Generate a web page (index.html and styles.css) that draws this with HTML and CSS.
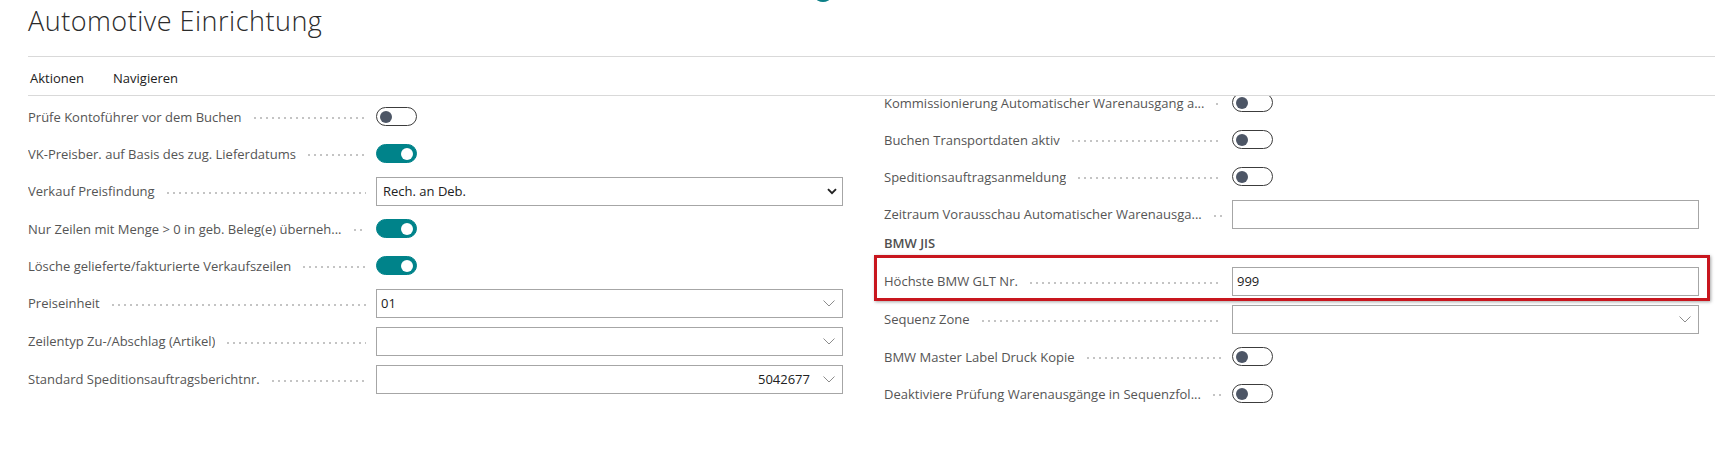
FILE: index.html
```html
<!DOCTYPE html>
<html lang="de">
<head>
<meta charset="utf-8">
<title>Automotive Einrichtung</title>
<link rel="stylesheet" href="styles.css">
</head>
<body>
<div class="spinner"></div>
<header class="title-bar"><h1 class="title">Automotive Einrichtung</h1></header>
<nav class="actions"><span>Aktionen</span><span>Navigieren</span></nav>
<main class="form">
  <section class="col col-left">
    <div class="row"><div class="label"><span class="text">Prüfe Kontoführer vor dem Buchen</span><span class="leader"></span></div><span class="toggle"></span></div>
    <div class="row"><div class="label"><span class="text">VK-Preisber. auf Basis des zug. Lieferdatums</span><span class="leader"></span></div><span class="toggle on"></span></div>
    <div class="row row-i"><div class="label"><span class="text">Verkauf Preisfindung</span><span class="leader"></span></div><div class="field select"><span class="value">Rech. an Deb.</span><svg class="chev-bold" width="10" height="7" viewBox="0 0 10 7"><path d="M1 1.2 L5 5.2 L9 1.2" fill="none" stroke="#222" stroke-width="1.9"/></svg></div></div>
    <div class="row"><div class="label"><span class="text">Nur Zeilen mit Menge &gt; 0 in geb. Beleg(e) überneh...</span><span class="leader"></span></div><span class="toggle on"></span></div>
    <div class="row"><div class="label"><span class="text">Lösche gelieferte/fakturierte Verkaufszeilen</span><span class="leader"></span></div><span class="toggle on"></span></div>
    <div class="row row-i"><div class="label"><span class="text">Preiseinheit</span><span class="leader"></span></div><div class="field"><span class="value">01</span><svg class="chev" width="12" height="7" viewBox="0 0 12 7"><path d="M0.5 0.5 L6 6 L11.5 0.5" fill="none" stroke="#8c8c8c" stroke-width="1"/></svg></div></div>
    <div class="row row-i"><div class="label"><span class="text">Zeilentyp Zu-/Abschlag (Artikel)</span><span class="leader"></span></div><div class="field"><span class="value"></span><svg class="chev" width="12" height="7" viewBox="0 0 12 7"><path d="M0.5 0.5 L6 6 L11.5 0.5" fill="none" stroke="#8c8c8c" stroke-width="1"/></svg></div></div>
    <div class="row row-i"><div class="label"><span class="text">Standard Speditionsauftragsberichtnr.</span><span class="leader"></span></div><div class="field"><span class="value num">5042677</span><svg class="chev" width="12" height="7" viewBox="0 0 12 7"><path d="M0.5 0.5 L6 6 L11.5 0.5" fill="none" stroke="#8c8c8c" stroke-width="1"/></svg></div></div>
  </section>
  <section class="col col-right">
    <div class="row"><div class="label"><span class="text">Kommissionierung Automatischer Warenausgang a...</span><span class="leader"></span></div><span class="toggle"></span></div>
    <div class="row"><div class="label"><span class="text">Buchen Transportdaten aktiv</span><span class="leader"></span></div><span class="toggle"></span></div>
    <div class="row"><div class="label"><span class="text">Speditionsauftragsanmeldung</span><span class="leader"></span></div><span class="toggle"></span></div>
    <div class="row row-i"><div class="label"><span class="text">Zeitraum Vorausschau Automatischer Warenausga...</span><span class="leader"></span></div><div class="field"><span class="value"></span></div></div>
    <div class="group-caption">BMW JIS</div>
    <div class="row row-i highlight"><div class="label"><span class="text">Höchste BMW GLT Nr.</span><span class="leader"></span></div><div class="field"><span class="value">999</span></div></div>
    <div class="row row-i"><div class="label"><span class="text">Sequenz Zone</span><span class="leader"></span></div><div class="field"><span class="value"></span><svg class="chev" width="12" height="7" viewBox="0 0 12 7"><path d="M0.5 0.5 L6 6 L11.5 0.5" fill="none" stroke="#8c8c8c" stroke-width="1"/></svg></div></div>
    <div class="row"><div class="label"><span class="text">BMW Master Label Druck Kopie</span><span class="leader"></span></div><span class="toggle"></span></div>
    <div class="row"><div class="label"><span class="text">Deaktiviere Prüfung Warenausgänge in Sequenzfol...</span><span class="leader"></span></div><span class="toggle"></span></div>
  </section>
</main>
</body>
</html>
```
FILE: styles.css
```css
html, body {
  margin: 0;
  background: #ffffff;
}
body {
  font-family: "Open Sans", "Noto Sans", sans-serif;
  font-size: 13px;
  color: #555555;
  height: 455px;
  overflow: hidden;
  position: relative;
}
.spinner {
  position: absolute;
  left: 816px;
  top: -6px;
  width: 14px;
  height: 8px;
  border-radius: 50%;
  background: #0b7f87;
}
.title-bar {
  margin-left: 28px;
  height: 57px;
  box-sizing: border-box;
  border-bottom: 1px solid #d9d9d9;
  padding-top: 3px;
}
.title {
  margin: 0;
  font-weight: 300;
  font-size: 27px;
  line-height: 36px;
  letter-spacing: 0.5px;
  color: #2b2b2b;
}
.actions {
  margin-left: 28px;
  height: 39px;
  box-sizing: border-box;
  border-bottom: 1px solid #d9d9d9;
  display: flex;
  align-items: center;
  gap: 29px;
  padding: 3px 0 0 2px;
  color: #212121;
}
.form {
  display: grid;
  grid-template-columns: 815px 815px;
  column-gap: 41px;
  align-items: start;
  margin-left: 28px;
  padding-top: 2px;
  height: 357px;
  overflow: hidden;
}
.col-right {
  margin-top: -14px;
}
.row {
  display: flex;
  align-items: center;
  height: 37px;
}
.row-i {
  height: 38px;
}
.label {
  flex: 0 0 348px;
  display: flex;
  align-items: center;
  min-width: 0;
}
.text {
  white-space: nowrap;
  overflow: hidden;
  text-overflow: ellipsis;
}
.leader {
  flex: 1 1 auto;
  min-width: 4px;
  height: 4px;
  margin: 3px 10px 0 10px;
  background-image: radial-gradient(circle, #c4c4c4 0.9px, rgba(255,255,255,0) 1.3px);
  background-size: 6px 4px;
  background-repeat: repeat-x;
  background-position: left center;
}
.field {
  flex: 0 0 467px;
  height: 29px;
  box-sizing: border-box;
  border: 1px solid #a6a6a6;
  display: flex;
  align-items: center;
  padding: 0 7px 0 4px;
  color: #212121;
}
.field .value {
  flex: 1 1 auto;
}
.field .value.num {
  text-align: right;
  margin-right: 13px;
}
.field.select {
  padding: 0 5px 0 6px;
}
.chev, .chev-bold {
  display: block;
  flex: 0 0 auto;
}
.toggle {
  width: 41px;
  height: 19px;
  box-sizing: border-box;
  border: 1px solid #3c3c3c;
  border-radius: 10px;
  display: flex;
  align-items: center;
  padding: 0 3px;
}
.toggle::before {
  content: "";
  width: 12px;
  height: 12px;
  border-radius: 50%;
  background: #4d5666;
}
.toggle.on {
  background: #00838a;
  border-color: #00838a;
  justify-content: flex-end;
}
.toggle.on::before {
  background: #ffffff;
}
.group-caption {
  height: 29px;
  box-sizing: border-box;
  padding-top: 1px;
  line-height: 18px;
  font-weight: 600;
  color: #505050;
}
.highlight {
  position: relative;
}
.highlight::after {
  content: "";
  position: absolute;
  left: -10px;
  right: -11px;
  top: -7px;
  bottom: -1px;
  border: 3px solid #c8161e;
  box-sizing: border-box;
  box-shadow: 1px 1px 3px rgba(0, 0, 0, 0.35);
  pointer-events: none;
}
```
